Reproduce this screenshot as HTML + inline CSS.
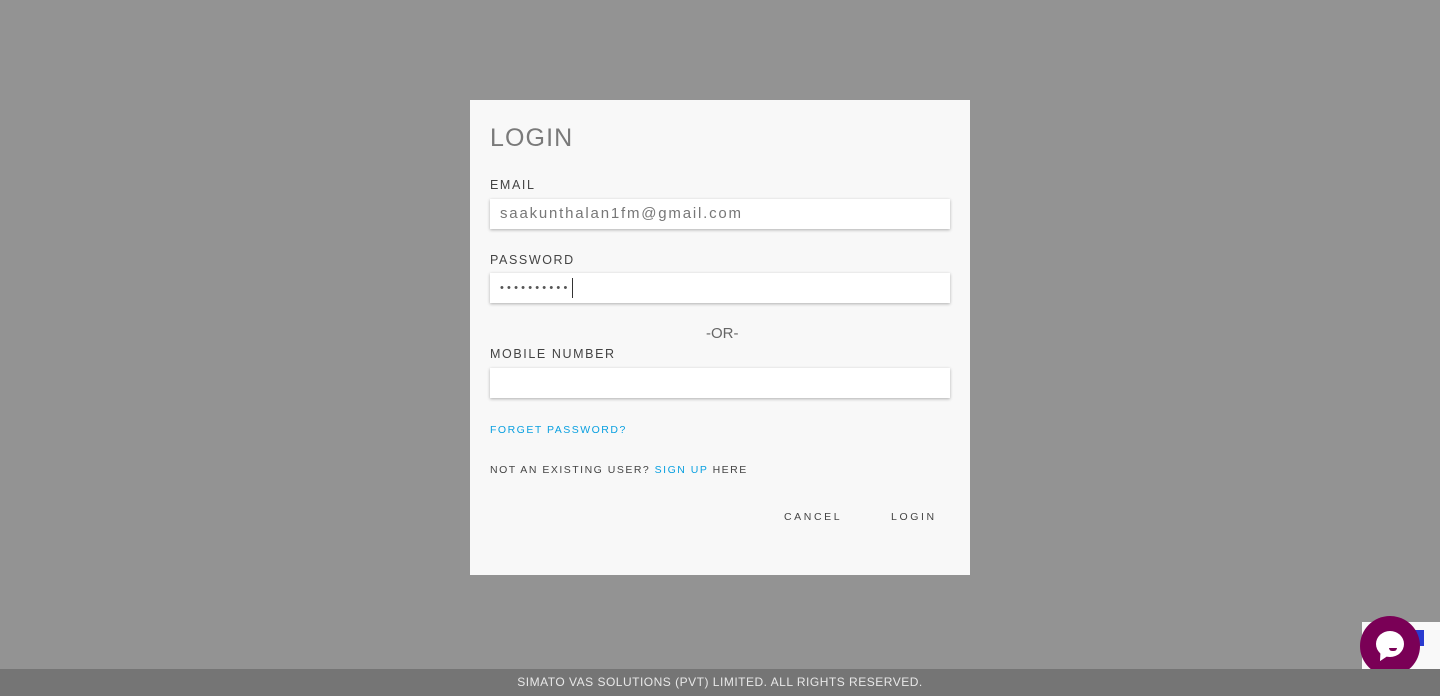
<!DOCTYPE html>
<html><head><style>
body{margin:0;width:1440px;height:696px;background:#939393;font-family:"Liberation Sans",sans-serif;position:relative;overflow:hidden}
.p{position:absolute;left:470px;top:100px;width:500px;height:475px;background:#f8f8f8}
.a{position:absolute;white-space:nowrap}
h1{position:absolute;left:20px;top:24px;margin:0;font-weight:normal;font-size:25px;letter-spacing:1.1px;color:#7a7a7a}
.l{font-size:12.5px;letter-spacing:1.6px;color:#444}
.i{position:absolute;left:20px;width:460px;height:30px;background:#fff;box-shadow:0 1px 3px rgba(0,0,0,.3)}
.s{font-size:10.5px;letter-spacing:1.5px;color:#444}
.b{color:#0aa0e0}
.f{position:absolute;left:0;top:669px;width:1440px;height:27px;background:#757575;color:#e8e8e8;font-size:12px;letter-spacing:0.5px;text-align:center;line-height:27px}
</style></head><body>
<div class="p">
<h1>LOGIN</h1>
<div class="a l" style="left:20px;top:78px">EMAIL</div>
<div class="i" style="top:99px"><span class="a" style="left:10px;top:6px;font-size:15px;letter-spacing:1.8px;color:#777">saakunthalan1fm@gmail.com</span></div>
<div class="a l" style="left:20px;top:153px">PASSWORD</div>
<div class="i" style="top:173px"><span class="a" style="left:10px;top:9px;font-size:11px;letter-spacing:3.2px;color:#555">••••••••••</span><span class="a" style="left:82px;top:5px;width:1px;height:20px;background:#333"></span></div>
<div class="a" style="left:236px;top:225px;font-size:15px;color:#666">-OR-</div>
<div class="a l" style="left:20px;top:247px">MOBILE NUMBER</div>
<div class="i" style="top:268px"></div>
<div class="a s b" style="left:20px;top:324px">FORGET PASSWORD?</div>
<div class="a s" style="left:20px;top:364px">NOT AN EXISTING USER? <span class="b">SIGN UP</span> HERE</div>
<div class="a s" style="left:314px;top:411px;letter-spacing:2.6px">CANCEL</div>
<div class="a s" style="left:421px;top:411px;letter-spacing:2.6px">LOGIN</div>
</div>
<div class="a" style="left:1362px;top:622px;width:78px;height:47px;background:#f9f9f9"></div>
<div class="a" style="left:1412px;top:630px;width:12px;height:16px;background:#2a3bd0"></div>
<div class="a" style="left:1360px;top:616px;width:60px;height:60px;border-radius:50%;background:#7a0056"></div>
<div class="a" style="left:1376px;top:631px;width:28px;height:26px;border-radius:50%;background:#fff"></div>
<div class="a" style="left:1378px;top:652px;width:0;height:0;border-left:4px solid transparent;border-right:6px solid transparent;border-top:10px solid #fff;transform:rotate(25deg)"></div>
<div class="a" style="left:1389px;top:648px;width:8px;height:3px;border-radius:0 0 4px 4px;background:#7a0056"></div>
<div class="f">SIMATO VAS SOLUTIONS (PVT) LIMITED. ALL RIGHTS RESERVED.</div>
</body></html>
